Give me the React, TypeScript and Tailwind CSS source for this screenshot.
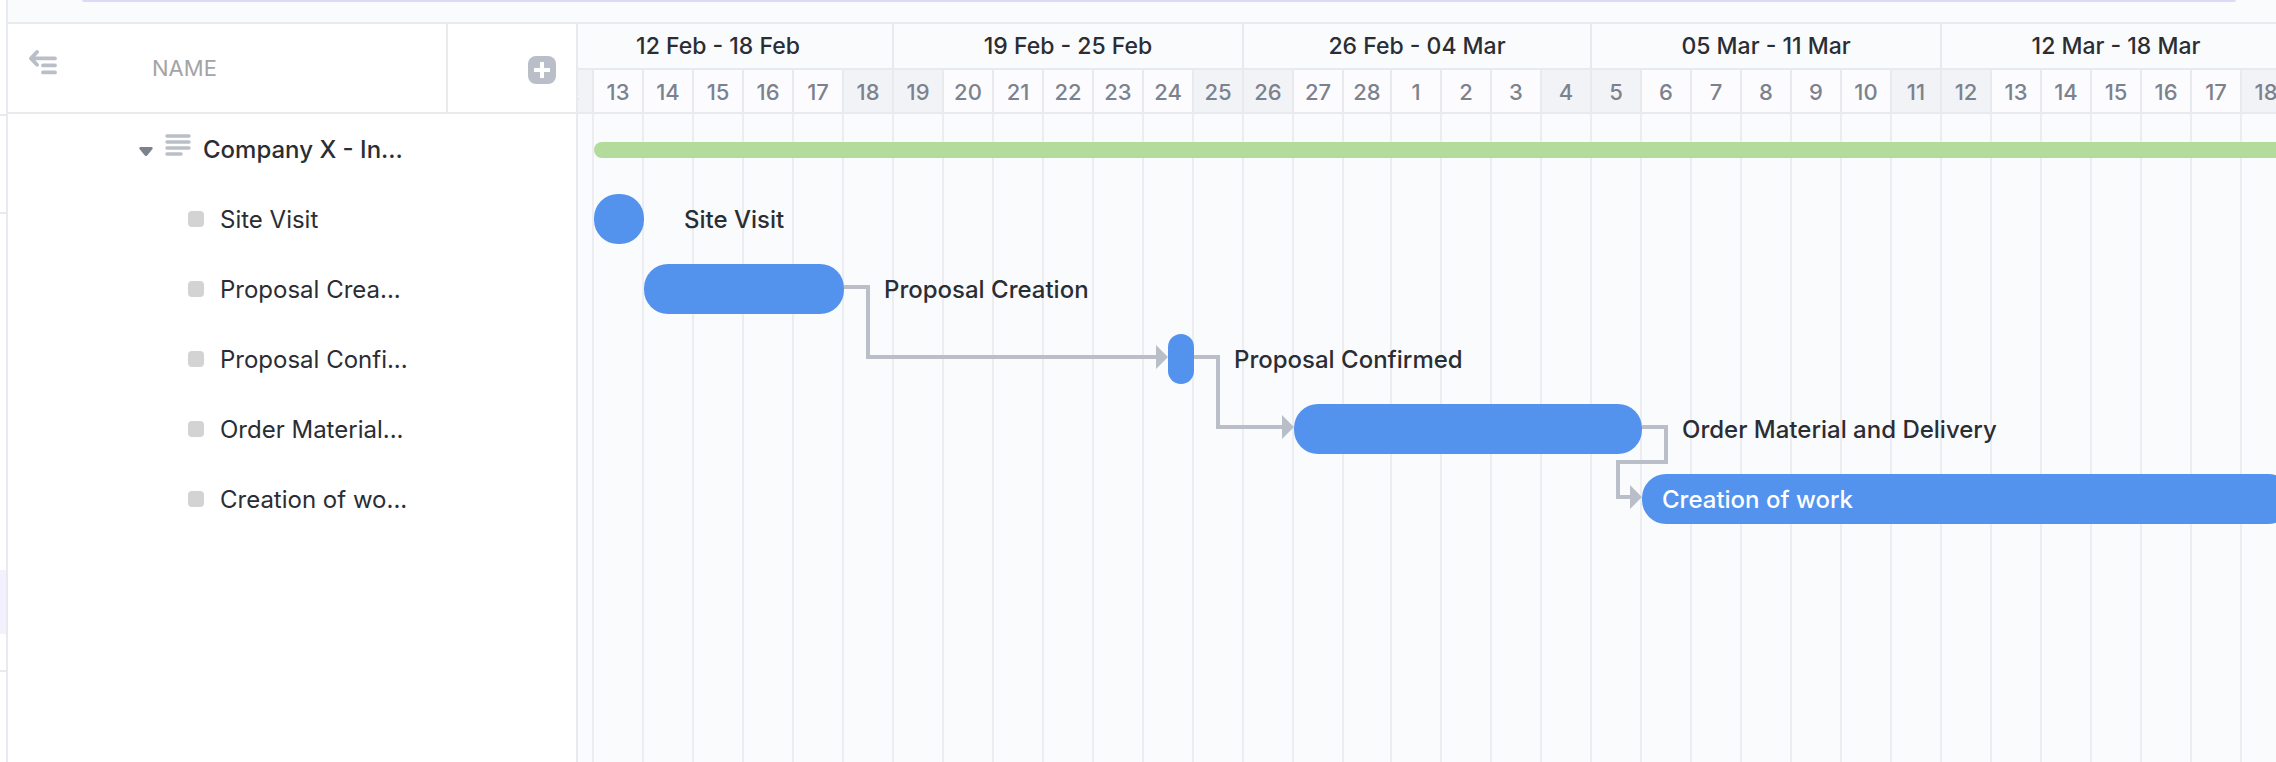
import clsx from "clsx";

interface ITask {
  name: string;
  short: string;
  left: number;
  width: number;
  inside?: boolean;
}

interface IDay {
  label: number;
  weekend?: boolean;
  narrow?: boolean;
}

interface IWeek {
  title: string;
  days: IDay[];
}

const makeDays = (labels: number[]): IDay[] =>
  labels.map((label, i) => ({
    label,
    weekend: i === 0 || i === labels.length - 1,
    narrow: label === 28,
  }));

const weeks: IWeek[] = [
  { title: "12 Feb - 18 Feb", days: makeDays([12, 13, 14, 15, 16, 17, 18]) },
  { title: "19 Feb - 25 Feb", days: makeDays([19, 20, 21, 22, 23, 24, 25]) },
  { title: "26 Feb - 04 Mar", days: makeDays([26, 27, 28, 1, 2, 3, 4]) },
  { title: "05 Mar - 11 Mar", days: makeDays([5, 6, 7, 8, 9, 10, 11]) },
  { title: "12 Mar - 18 Mar", days: makeDays([12, 13, 14, 15, 16, 17, 18]) },
];

// left and width are measured from the start of the first week
const tasks: ITask[] = [
  { name: "Site Visit", short: "Site Visit", left: 50, width: 50 },
  { name: "Proposal Creation", short: "Proposal Crea...", left: 100, width: 200 },
  { name: "Proposal Confirmed", short: "Proposal Confi...", left: 624, width: 26 },
  { name: "Order Material and Delivery", short: "Order Material...", left: 750, width: 348 },
  { name: "Creation of work", short: "Creation of wo...", left: 1098, width: 650, inside: true },
];

const CollapseIcon = () => (
  <svg width="28" height="26" viewBox="0 0 28 26" fill="none" stroke="#b9bec8" strokeWidth="3.8" strokeLinecap="round" strokeLinejoin="round">
    <path d="M8 3 2 9.4 8 15.8M3 9.4h23M14 16.4h12M14 23.4h12" />
  </svg>
);

const ListIcon = () => (
  <svg width="26" height="22" viewBox="0 0 26 22" stroke="#b9bec8" strokeWidth="3.4" strokeLinecap="round">
    <path d="M2 2h22M2 8h22M2 14h22M2 20h14" />
  </svg>
);

const Rail = () => (
  <div className="w-2 shrink-0 border-r-2 border-[#e9e9f0] bg-white">
    <div className="h-[116px] border-b-2 border-[#e9eaee]" />
    <div className="h-[98px] border-b-2 border-[#e9eaee]" />
    <div className="mt-[356px] h-16 bg-[#f3f1fe]" />
    <div className="h-[38px] border-b-2 border-[#e9eaee]" />
  </div>
);

const NamePanel = () => (
  <section className="w-[570px] shrink-0 border-r-2 border-[#e9eaee] bg-white">
    <header className="flex h-[90px] border-b-2 border-[#e9eaee]">
      <div className="flex w-[440px] border-r-2 border-[#e9eaee] pl-[21px]">
        <button aria-label="Collapse list" className="mt-[25px] h-[26px] w-7">
          <CollapseIcon />
        </button>
        <h2 className="ml-[95px] self-center text-[22px] leading-8 text-[#a4a4a4]">NAME</h2>
      </div>
      <div className="flex flex-1 items-center justify-end pr-5">
        <button aria-label="Add column" className="mt-1 h-7 w-7">
          <svg width="28" height="28" viewBox="0 0 28 28">
            <rect width="28" height="28" rx="8" fill="#b9bec8" />
            <path d="M14 6v16M6 14h16" stroke="#fff" strokeWidth="4" />
          </svg>
        </button>
      </div>
    </header>
    <div className="flex h-[70px] items-center pt-0.5 pl-[131px]">
      <button aria-label="Toggle Company X" className="mt-0.5">
        <svg width="14" height="9" viewBox="0 0 14 9" fill="#7c828d">
          <path d="M1.5 0h11a1.3 1.3 0 0 1 1 2L8.4 8.2a1.8 1.8 0 0 1-2.8 0L.5 2a1.3 1.3 0 0 1 1-2z" />
        </svg>
      </button>
      <span className="mb-2.5 ml-3">
        <ListIcon />
      </span>
      <span className="ml-3 text-[24px] leading-8 font-medium text-[#2a2e34]">Company X - In...</span>
    </div>
    <ul>
      {tasks.map((task) => (
        <li key={task.name} className="flex h-[70px] items-center gap-4 pl-[180px]">
          <span className="h-4 w-4 rounded bg-[#d3d3d3]" />
          <span className="pt-0.5 text-[24px] leading-8 text-[#2a2e34]">{task.short}</span>
        </li>
      ))}
    </ul>
  </section>
);

const TimelineHeader = () => (
  <header className="flex w-max">
    {weeks.map((week) => (
      <div key={week.title}>
        <div className="flex h-[46px] items-center justify-center border-r-2 border-b-2 border-[#e9eaee] text-[23px] font-medium text-[#2a2e34]">
          {week.title}
        </div>
        <div className="flex">
          {week.days.map((day) => (
            <div
              key={day.label}
              className={clsx(
                "flex h-11 items-center justify-center border-r-2 border-b-2 border-[#e9eaee] pt-0.5 text-[22px] font-medium text-[#7c828d]",
                day.narrow ? "w-12" : "w-[50px]",
                day.weekend ? "bg-[#f2f3f7]" : "bg-[#fcfcfe]"
              )}
            >
              {day.label}
            </div>
          ))}
        </div>
      </div>
    ))}
  </header>
);

const Connectors = () => (
  <svg className="absolute top-0 left-0" width="1750" height="420" fill="none" stroke="#b9bec8" strokeWidth="4">
    <path d="M300 173h24v70h290M650 243h24v70h66M1098 313h24v35h-48v35h14" />
    <g fill="#b9bec8" stroke="none">
      <path d="M612 231l12 12-12 12zM738 301l12 12-12 12zM1086 371l12 12-12 12z" />
    </g>
  </svg>
);

const TimelineBody = () => (
  <div className="relative flex-1">
    <div className="absolute inset-0 flex">
      {weeks.flatMap((week) =>
        week.days.map((day) => (
          <div
            key={`${week.title}-${day.label}`}
            className={clsx("shrink-0 border-r-2 border-[#ededf1]", day.narrow ? "w-12" : "w-[50px]")}
          />
        ))
      )}
    </div>
    <Connectors />
    <div className="relative">
      <div className="flex h-[70px] items-center pt-0.5 pl-[50px]">
        <div className="h-4 flex-1 rounded-l-full bg-[#b2db9c]" />
      </div>
      {tasks.map((task) => (
        <div key={task.name} className="flex h-[70px] items-center" style={{ paddingLeft: task.left }}>
          <div
            className="flex h-[50px] shrink-0 items-center rounded-3xl bg-[#5393ee]"
            style={{ width: task.width }}
          >
            {task.inside && <span className="pt-0.5 pl-5 text-[24px] font-medium text-white">{task.name}</span>}
          </div>
          {!task.inside && (
            <span className="pt-0.5 pl-10 text-[24px] font-medium whitespace-nowrap text-[#2a2e34]">{task.name}</span>
          )}
        </div>
      ))}
    </div>
  </div>
);

const App = () => {
  return (
    <main className="flex min-h-screen overflow-hidden bg-[#fafbfd] font-['Inter','Liberation_Sans',sans-serif]">
      <Rail />
      <div className="flex min-w-0 flex-1 flex-col">
        <div className="h-6 border-b-2 border-[#e9eaee] pr-10 pl-[74px]">
          <div className="h-0.5 rounded-b-full bg-[#dddaf8]" />
        </div>
        <div className="flex flex-1">
          <NamePanel />
          <section className="flex min-w-0 flex-1 overflow-hidden">
            <div className="-ml-[34px] flex flex-1 flex-col">
              <TimelineHeader />
              <TimelineBody />
            </div>
          </section>
        </div>
      </div>
    </main>
  );
};

export default App;
